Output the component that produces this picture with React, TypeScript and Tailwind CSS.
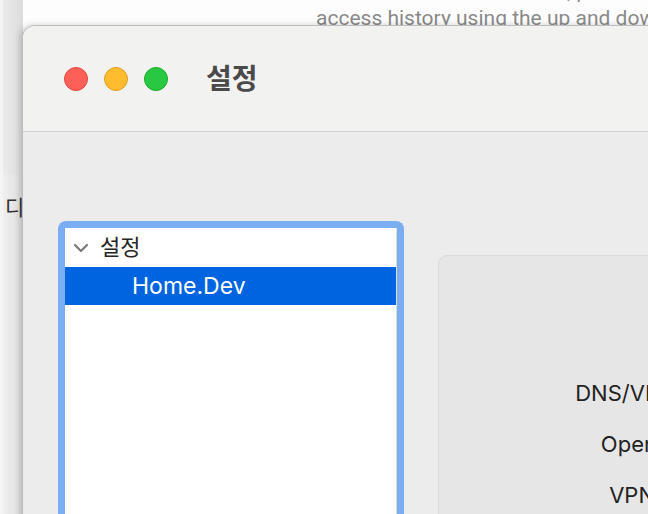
import React from 'react';

const FONT = "font-['Inter','Noto_Sans_CJK_KR',sans-serif]";

const TrafficLights: React.FC = () => (
  <div className="flex items-center gap-4">
    <span className="w-6 h-6 rounded-full bg-[#fe5f57] border border-[#e2463f]" />
    <span className="w-6 h-6 rounded-full bg-[#febc2e] border border-[#dea123]" />
    <span className="w-6 h-6 rounded-full bg-[#28c840] border border-[#1aab29]" />
  </div>
);

const Chevron: React.FC = () => (
  <svg width="16" height="10" viewBox="0 0 16 10" className="shrink-0">
    <path d="M2 2 L8 8 L14 2" fill="none" stroke="#7a7a7a" strokeWidth="2.2" strokeLinecap="round" strokeLinejoin="round" />
  </svg>
);

const TreeView: React.FC = () => (
  <div className="w-[346px] shrink-0 self-stretch rounded-t-[8px] border-[7px] border-b-0 border-[#7badf2] bg-white">
    <div className="h-full border-r border-[#dcdcdc]">
      <div className="flex items-center gap-[11px] h-[39px] pl-[8px] text-[22px] text-[#262626]">
        <Chevron />
        <span>설정</span>
      </div>
      <div className="flex items-center h-[38px] pl-[67px] bg-[#0064e0] text-[23px] text-white">
        Home.Dev
      </div>
    </div>
  </div>
);

const SettingsPanel: React.FC = () => (
  <div className="w-[400px] shrink-0 self-start mt-[34px] rounded-[9px] border border-[#dadada] bg-[#e6e6e6] pt-[124px] pb-[40px]">
    <div className="flex flex-col gap-[24px] w-[269px] items-end text-[22px] text-[#222] leading-[27px]">
      <span className="whitespace-nowrap">DNS/VPN IP:</span>
      <span className="whitespace-nowrap">OpenVPN:</span>
      <span className="whitespace-nowrap">VPN 서버:</span>
    </div>
  </div>
);

const App: React.FC = () => {
  return (
    <div className={`relative w-[648px] h-[514px] overflow-hidden bg-[#fdfdfd] ${FONT}`}>
      {/* desktop behind the window */}
      <div className="flex h-full">
        <div className="w-[23px] h-full flex flex-col bg-[#f4f4f4]">
          <div className="ml-[3px] h-[175px] bg-gradient-to-r from-[#ebebeb] to-[#dcdcdc]" />
          <div className="ml-[3px] flex-1 bg-gradient-to-r from-[#efefef] to-[#dedede] pt-[22px] pl-[2px] text-[21px] text-[#333] leading-none overflow-hidden">
            디
          </div>
        </div>
        <div className="flex-1 pl-[293px] -mt-[22px] font-['Roboto',sans-serif] text-[21px] leading-[27px] text-[#8a8a8a] whitespace-nowrap overflow-hidden">
          <div className="pl-[228px]">ed, press</div>
          <div>access history using the up and down</div>
        </div>
      </div>

      {/* window */}
      <div className="absolute left-[22px] top-[25px] w-[700px] h-[520px] flex flex-col rounded-tl-[13px] border-l border-t border-[#bdbdbd] bg-[#ececec] shadow-[-2px_0_6px_rgba(0,0,0,0.18)] overflow-hidden">
        <div className="h-[106px] shrink-0 flex items-center pl-[41px] bg-[#f2f2f1] border-b border-[#d2d2d2]">
          <TrafficLights />
          <span className="ml-[38px] text-[28px] font-bold text-[#4a4a4a]">설정</span>
        </div>
        <div className="flex-1 flex pl-[35px] pt-[89px] gap-[34px]">
          <TreeView />
          <SettingsPanel />
        </div>
      </div>
    </div>
  );
};

export default App;
